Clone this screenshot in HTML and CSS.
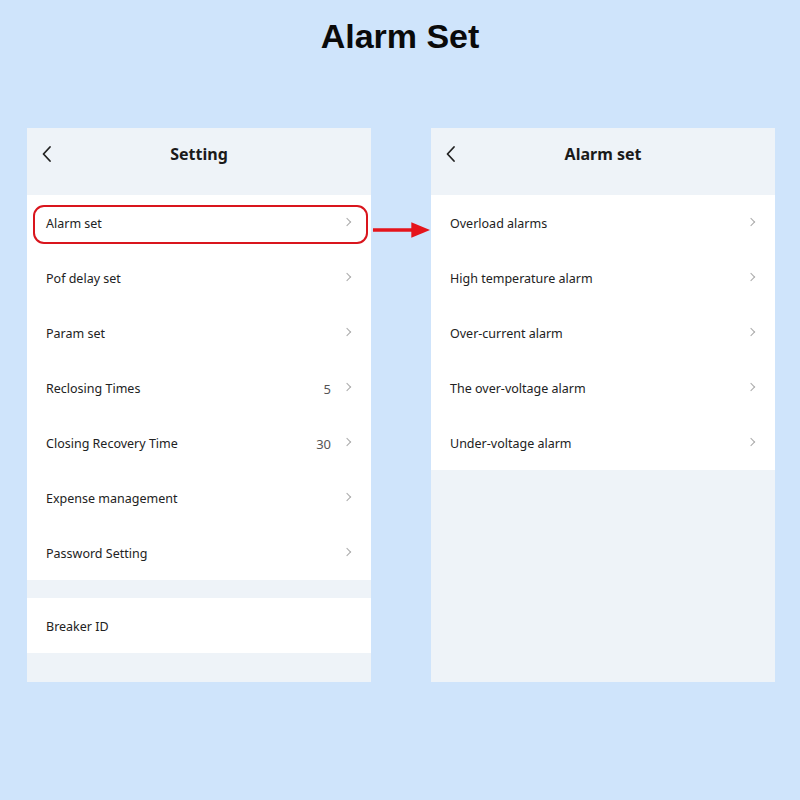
FILE: index.html
```html
<!DOCTYPE html>
<html>
<head>
<meta charset="utf-8">
<link rel="stylesheet" href="styles.css">
</head>
<body>
<h1 class="page-title">Alarm Set</h1>
<div class="stage">
  <section class="phone">
    <header class="nav">
      <svg class="back" width="12" height="18" viewBox="0 0 12 18"><path d="M9 2 L2.5 9 L9 16" fill="none" stroke="#222" stroke-width="1.8" stroke-linecap="round" stroke-linejoin="round"/></svg>
      <span class="nav-title">Setting</span>
    </header>
    <ul class="list">
      <li class="row highlighted"><span class="label">Alarm set</span><span class="chev"></span><span class="ring"></span></li>
      <li class="row"><span class="label">Pof delay set</span><span class="chev"></span></li>
      <li class="row"><span class="label">Param set</span><span class="chev"></span></li>
      <li class="row"><span class="label">Reclosing Times</span><span class="value">5</span><span class="chev"></span></li>
      <li class="row"><span class="label">Closing Recovery Time</span><span class="value">30</span><span class="chev"></span></li>
      <li class="row"><span class="label">Expense management</span><span class="chev"></span></li>
      <li class="row"><span class="label">Password Setting</span><span class="chev"></span></li>
    </ul>
    <div class="spacer"></div>
    <ul class="list">
      <li class="row"><span class="label">Breaker ID</span></li>
    </ul>
  </section>
  <svg class="arrow" width="60" height="20" viewBox="0 0 60 20"><line x1="1" y1="10" x2="44" y2="10" stroke="#e5141b" stroke-width="3.5"/><polygon points="40,2 59,10 40,18" fill="#e5141b"/></svg>
  <section class="phone">
    <header class="nav">
      <svg class="back" width="12" height="18" viewBox="0 0 12 18"><path d="M9 2 L2.5 9 L9 16" fill="none" stroke="#222" stroke-width="1.8" stroke-linecap="round" stroke-linejoin="round"/></svg>
      <span class="nav-title">Alarm set</span>
    </header>
    <ul class="list">
      <li class="row"><span class="label">Overload alarms</span><span class="chev"></span></li>
      <li class="row"><span class="label">High temperature alarm</span><span class="chev"></span></li>
      <li class="row"><span class="label">Over-current alarm</span><span class="chev"></span></li>
      <li class="row"><span class="label">The over-voltage alarm</span><span class="chev"></span></li>
      <li class="row"><span class="label">Under-voltage alarm</span><span class="chev"></span></li>
    </ul>
  </section>
</div>
</body>
</html>
```
FILE: styles.css
```css
* { box-sizing: border-box; }
html, body { margin: 0; padding: 0; }
body {
  width: 800px;
  height: 800px;
  background: #cfe4fb;
  font-family: "Noto Sans", "Liberation Sans", sans-serif;
  color: #222;
  overflow: hidden;
}
.page-title {
  margin: 0;
  padding-top: 14px;
  height: 128px;
  text-align: center;
  font-family: "Liberation Sans", Arial, sans-serif;
  font-weight: 700;
  font-size: 34px;
  line-height: 44px;
  color: #0a0a0a;
}
.stage {
  display: flex;
  align-items: flex-start;
  padding-left: 27px;
  position: relative;
}
.phone {
  width: 344px;
  height: 554px;
  background: #eef3f8;
  display: flex;
  flex-direction: column;
}
.nav {
  height: 67px;
  padding-top: 12px;
  position: relative;
}
.back {
  position: absolute;
  left: 14px;
  top: 17px;
}
.nav-title {
  display: block;
  text-align: center;
  font-weight: 700;
  font-size: 16px;
  line-height: 28px;
  color: #1a1a1a;
}
.list {
  list-style: none;
  margin: 0;
  padding: 0;
  background: #fff;
}
.row {
  position: relative;
  height: 55px;
  display: flex;
  align-items: center;
  padding: 2px 20px 0 19px;
  font-size: 12.5px;
}
.label { flex: 1; color: #222; }
.value {
  color: #555;
  font-size: 13px;
  margin-right: 13px;
}
.chev {
  width: 6px;
  height: 6px;
  border-right: 1.2px solid #aaa;
  border-top: 1.2px solid #aaa;
  transform: rotate(45deg);
  margin-right: 1px;
  margin-top: -3px;
}
.ring {
  position: absolute;
  left: 6px;
  right: 3px;
  top: 10px;
  bottom: 6px;
  border: 2px solid #d9151d;
  border-radius: 11px;
}
.spacer { height: 18px; }
.arrow {
  margin: 92px 0 0 1px;
  flex: none;
  width: 59px;
}
```
